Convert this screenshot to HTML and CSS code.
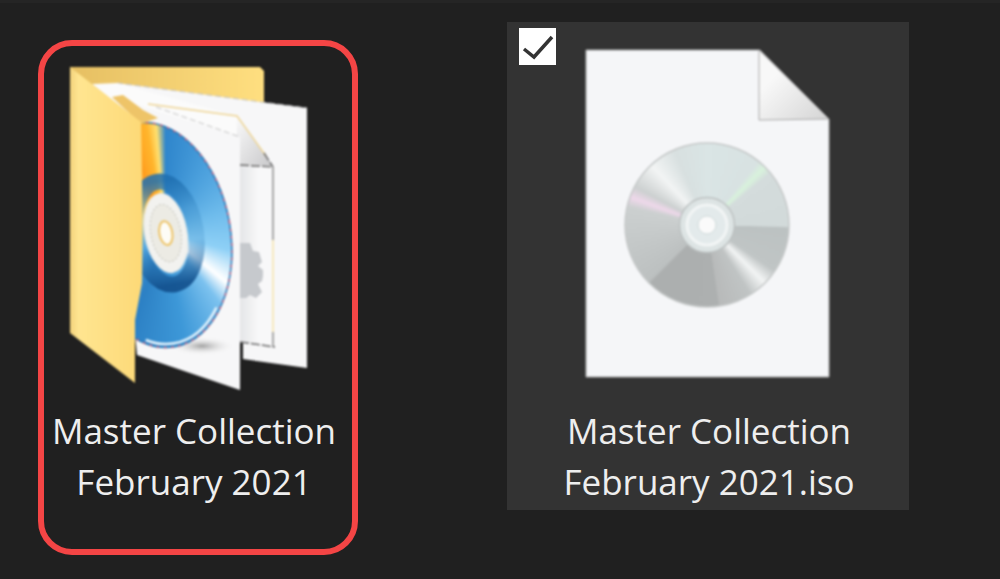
FILE: index.html
```html
<!DOCTYPE html>
<html lang="en">
<head>
    <meta charset="UTF-8">
    <meta name="viewport" content="width=device-width, initial-scale=1.0">
    <title>Master Collection February 2021</title>
    <link rel="stylesheet" href="styles.css">
</head>
<body>
    <div class="files">
        <!-- Folder, marked with the red outline -->
        <div class="item item-folder">
            <svg class="icon icon-folder" viewBox="70 67 240 325" width="240" height="325">
                <defs>
                    <linearGradient id="folderBack" x1="0" x2="1" y1="0" y2="0">
                        <stop offset="0" stop-color="#e6bf62"/>
                        <stop offset="1" stop-color="#ffdf80"/>
                    </linearGradient>
                    <linearGradient id="folderFront" x1="0" x2="1" y1="0" y2="0">
                        <stop offset="0" stop-color="#f3d27c"/>
                        <stop offset="0.12" stop-color="#ffe590"/>
                        <stop offset="1" stop-color="#fdd977"/>
                    </linearGradient>
                    <linearGradient id="sheetFold" x1="0" x2="1" y1="0" y2="1">
                        <stop offset="0" stop-color="#fafafa"/>
                        <stop offset="1" stop-color="#c8c8ca"/>
                    </linearGradient>
                    <linearGradient id="sheetInner" x1="0" x2="1" y1="0" y2="0">
                        <stop offset="0" stop-color="#e2e3e5"/>
                        <stop offset="0.6" stop-color="#f8f8f9"/>
                    </linearGradient>
                    <linearGradient id="bandGrad" x1="0" x2="0" y1="0" y2="1">
                        <stop offset="0" stop-color="#1f6fb0" stop-opacity="0.85"/>
                        <stop offset="0.3" stop-color="#2f80bd" stop-opacity="0.3"/>
                        <stop offset="0.6" stop-color="#2f80bd" stop-opacity="0.2"/>
                        <stop offset="1" stop-color="#124f8c" stop-opacity="0.9"/>
                    </linearGradient>
                    <radialGradient id="discShadow">
                        <stop offset="0" stop-color="#a0a0a0"/>
                        <stop offset="1" stop-color="#f6f6f6" stop-opacity="0"/>
                    </radialGradient>
                </defs>
                <path d="M70 67H260l4 4V112H70Z" fill="url(#folderBack)"/>
                <path d="M117 83L307 108V368L243 359V140Z" fill="#f7f7f8"/>
                <path class="sheet-top" d="M117 83L307 108"/>
                <path d="M92 84L117 83L240 117L240 140L112 100Z" fill="#fbfbfb"/>
                <path d="M237 116L273 166V347L238 342Z" fill="url(#sheetInner)"/>
                <path d="M237 116L273 166L238 165Z" fill="url(#sheetFold)"/>
                <path class="sheet-line" d="M148 104L237 116L266 156"/>
                <path class="sheet-dark" d="M264 153L273 167"/>
                <path class="sheet-dark" d="M240 165L273 167"/>
                <path class="sheet-side" d="M273 167V240"/>
                <path class="sheet-pale" d="M273 240V332"/>
                <path class="sheet-side" d="M273 332V347"/>
                <path class="sheet-dark" d="M240 342L275 347"/>
                <path class="gear" d="M240 243L250 243L253 251L259 252L262 262L258 266L263 270L263 276L262 281L258 284L262 292L256 298L250 295L246 298L240 298Z"/>
                <path d="M112 97L240 137V390L137 355Z" fill="#f7f7f8"/>
                <path class="sheet-top" d="M156 107L240 137"/>
                <ellipse cx="202" cy="346" rx="32" ry="9" fill="url(#discShadow)"/>
                <foreignObject x="79" y="121" width="152" height="228" transform="rotate(-10 155 235)">
                    <div class="disc-blue"></div>
                </foreignObject>
                <g transform="rotate(-10 155 235)">
                    <ellipse class="disc-rim" cx="155" cy="235" rx="75.5" ry="113.5"/>
                    <ellipse class="disc-dots" cx="155" cy="235" rx="75.5" ry="113.5" pathLength="100"/>
                    <ellipse class="disc-shine" cx="155" cy="235" rx="72" ry="110" pathLength="100"/>
                    <ellipse class="disc-band" cx="166" cy="235" rx="30" ry="52" stroke="url(#bandGrad)"/>
                    <ellipse class="disc-hub" cx="166" cy="235" rx="21" ry="40"/>
                    <ellipse class="disc-hub-ring" cx="166" cy="235" rx="15" ry="29"/>
                    <ellipse class="disc-hole" cx="166" cy="235" rx="6.5" ry="12"/>
                </g>
                <path d="M112 97L123 95L143 110L158 118L141 124Z" fill="#eec468"/>
                <path d="M70 67L141 122C142 170 143 230 142 283L135 320V383L70 333Z" fill="url(#folderFront)"/>
            </svg>
            <div class="label">Master Collection<br>February 2021</div>
        </div>

        <!-- Selected iso file -->
        <div class="item item-iso">
            <span class="check">
                <svg viewBox="0 0 37 37" width="37" height="37"><path d="M5 21L15 29L33 9" fill="none" stroke="#333" stroke-width="3.5"/></svg>
            </span>
            <svg class="icon icon-iso" viewBox="585 49 245 329" width="245" height="329">
                <defs>
                    <linearGradient id="foldGrad" x1="0" x2="1" y1="0" y2="1">
                        <stop offset="0.3" stop-color="#f8f8f8"/>
                        <stop offset="1" stop-color="#d4d4d4"/>
                    </linearGradient>
                </defs>
                <path d="M586 50H760L829 119V377H586Z" fill="#f5f6f8" stroke="#aaa"/>
                <path d="M759 50L829 119L759 120Z" fill="url(#foldGrad)" stroke="#aaa"/>
                <foreignObject x="625" y="143" width="164" height="164">
                    <div class="disc-silver"></div>
                </foreignObject>
                <circle class="cd-edge" cx="707" cy="225" r="82"/>
                <circle class="cd-hub" cx="707" cy="225" r="27.5"/>
                <circle class="cd-ring" cx="707" cy="225" r="20"/>
                <circle class="cd-hole" cx="707" cy="225" r="9"/>
            </svg>
            <div class="label">Master Collection<br>February 2021.iso</div>
        </div>
    </div>
</body>
</html>
```

FILE: styles.css
```css
body {
    margin: 0;
    height: 579px;
    overflow: hidden;
    background-color: #202020;
    font-family: "Open Sans", "Noto Sans", sans-serif;
}
.files {
    display: flex;
    align-items: flex-start;
    border-top: 3px solid #252525;
    padding: 19px 0 0 38px;
}
.item {
    position: relative;
    box-sizing: border-box;
    display: flex;
    flex-direction: column;
}
.item-folder {
    width: 320px;
    height: 515px;
    margin-top: 18px;
    border: 6px solid #f44545;
    border-radius: 34px;
    padding: 21px 0 0 26px;
}
.item-iso {
    width: 402px;
    height: 488px;
    margin-left: 149px;
    background-color: #333333;
    padding: 27px 0 0 78px;
}
.icon {
    display: block;
    flex: none;
    filter: blur(1px);
}
.label {
    font-size: 35px;
    line-height: 51px;
    color: #eeeeee;
    text-align: center;
    white-space: nowrap;
}
.item-folder .label {
    margin: 13px 0 0 -20px;
    width: 288px;
}
.item-iso .label {
    margin: 27px 0 0 -77px;
    width: 402px;
}
.check {
    position: absolute;
    left: 12px;
    top: 6px;
    width: 37px;
    height: 37px;
    background-color: #ffffff;
}
.check svg {
    display: block;
}

/* folder drawing */
.sheet-top {
    fill: none;
    stroke: #c4c4c4;
    stroke-width: 1;
    stroke-dasharray: 6 3;
}
.sheet-line {
    fill: none;
    stroke: #eed596;
    stroke-width: 1.5;
}
.sheet-dark {
    fill: none;
    stroke: #6c6c6c;
    stroke-width: 1.5;
    stroke-dasharray: 9 2;
}
.sheet-side {
    fill: none;
    stroke: #a8a8a8;
    stroke-width: 2;
}
.sheet-pale {
    fill: none;
    stroke: #f7e9bd;
    stroke-width: 2;
}
.gear {
    fill: #c6c9cd;
}
.disc-blue {
    width: 152px;
    height: 228px;
    border-radius: 50%;
    background: conic-gradient(from 10deg at 57% 50%,
        #2f86cc 0deg, #4a9fdc 30deg, #6fbcec 70deg, #8ed0f6 105deg,
        #ffffff 129deg, #7cc2ef 142deg, #3d98d8 170deg, #2c80c4 200deg,
        #5fb2ea 235deg, #e8e4b8 300deg, #ffd060 325deg, #ff9d1e 340deg, #ffb52c 350deg, #ffe070 355deg, #2f86cc 360deg);
}
.disc-rim {
    fill: none;
    stroke: #2c78b4;
    stroke-width: 1.5;
}
.disc-dots {
    fill: none;
    stroke: #d25f7c;
    stroke-width: 1.5;
    stroke-dasharray: 0.4 0.8;
}
.disc-shine {
    fill: none;
    stroke: #e6f4fd;
    stroke-width: 2.5;
    stroke-dasharray: 15 85;
    stroke-dashoffset: -15;
}
.disc-band {
    fill: none;
    stroke-width: 16;
}
.disc-hub {
    fill: #f2f2ef;
    stroke: #e8e8e4;
}
.disc-hub-ring {
    fill: #ecebe4;
    stroke: #c4c4bc;
    stroke-dasharray: 2 2;
}
.disc-hole {
    fill: #fdfcf6;
    stroke: #eec56a;
    stroke-width: 2;
}

/* iso disc drawing */
.disc-silver {
    width: 164px;
    height: 164px;
    border-radius: 50%;
    background: conic-gradient(
        #dae5e5 0deg, #d8e2e2 39deg, #d8f2dc 45deg, #d4dcdc 51deg, #d2dada 91deg,
        #bcc2c2 92deg, #c0c5c5 124deg, #f2f4f4 135deg, #c0c4c4 148deg, #b8baba 171deg,
        #adb0b0 172deg, #acafaf 224deg,
        #bcc0c0 226deg, #ccd0d0 283deg, #eed8ea 290deg, #ccd0d0 298deg, #f2f4f4 317deg, #d8e0e0 336deg, #dae5e5 360deg);
}
.cd-edge {
    fill: none;
    stroke: #c6c9c9;
    stroke-width: 1.5;
}
.cd-hub {
    fill: #dde4e4;
    stroke: #bcc1c1;
    stroke-width: 1.5;
}
.cd-ring {
    fill: #e3eaeb;
    stroke: #f2f5f5;
    stroke-width: 3;
}
.cd-hole {
    fill: #fafafa;
    stroke: #d2dcdc;
    stroke-width: 1;
}
```
